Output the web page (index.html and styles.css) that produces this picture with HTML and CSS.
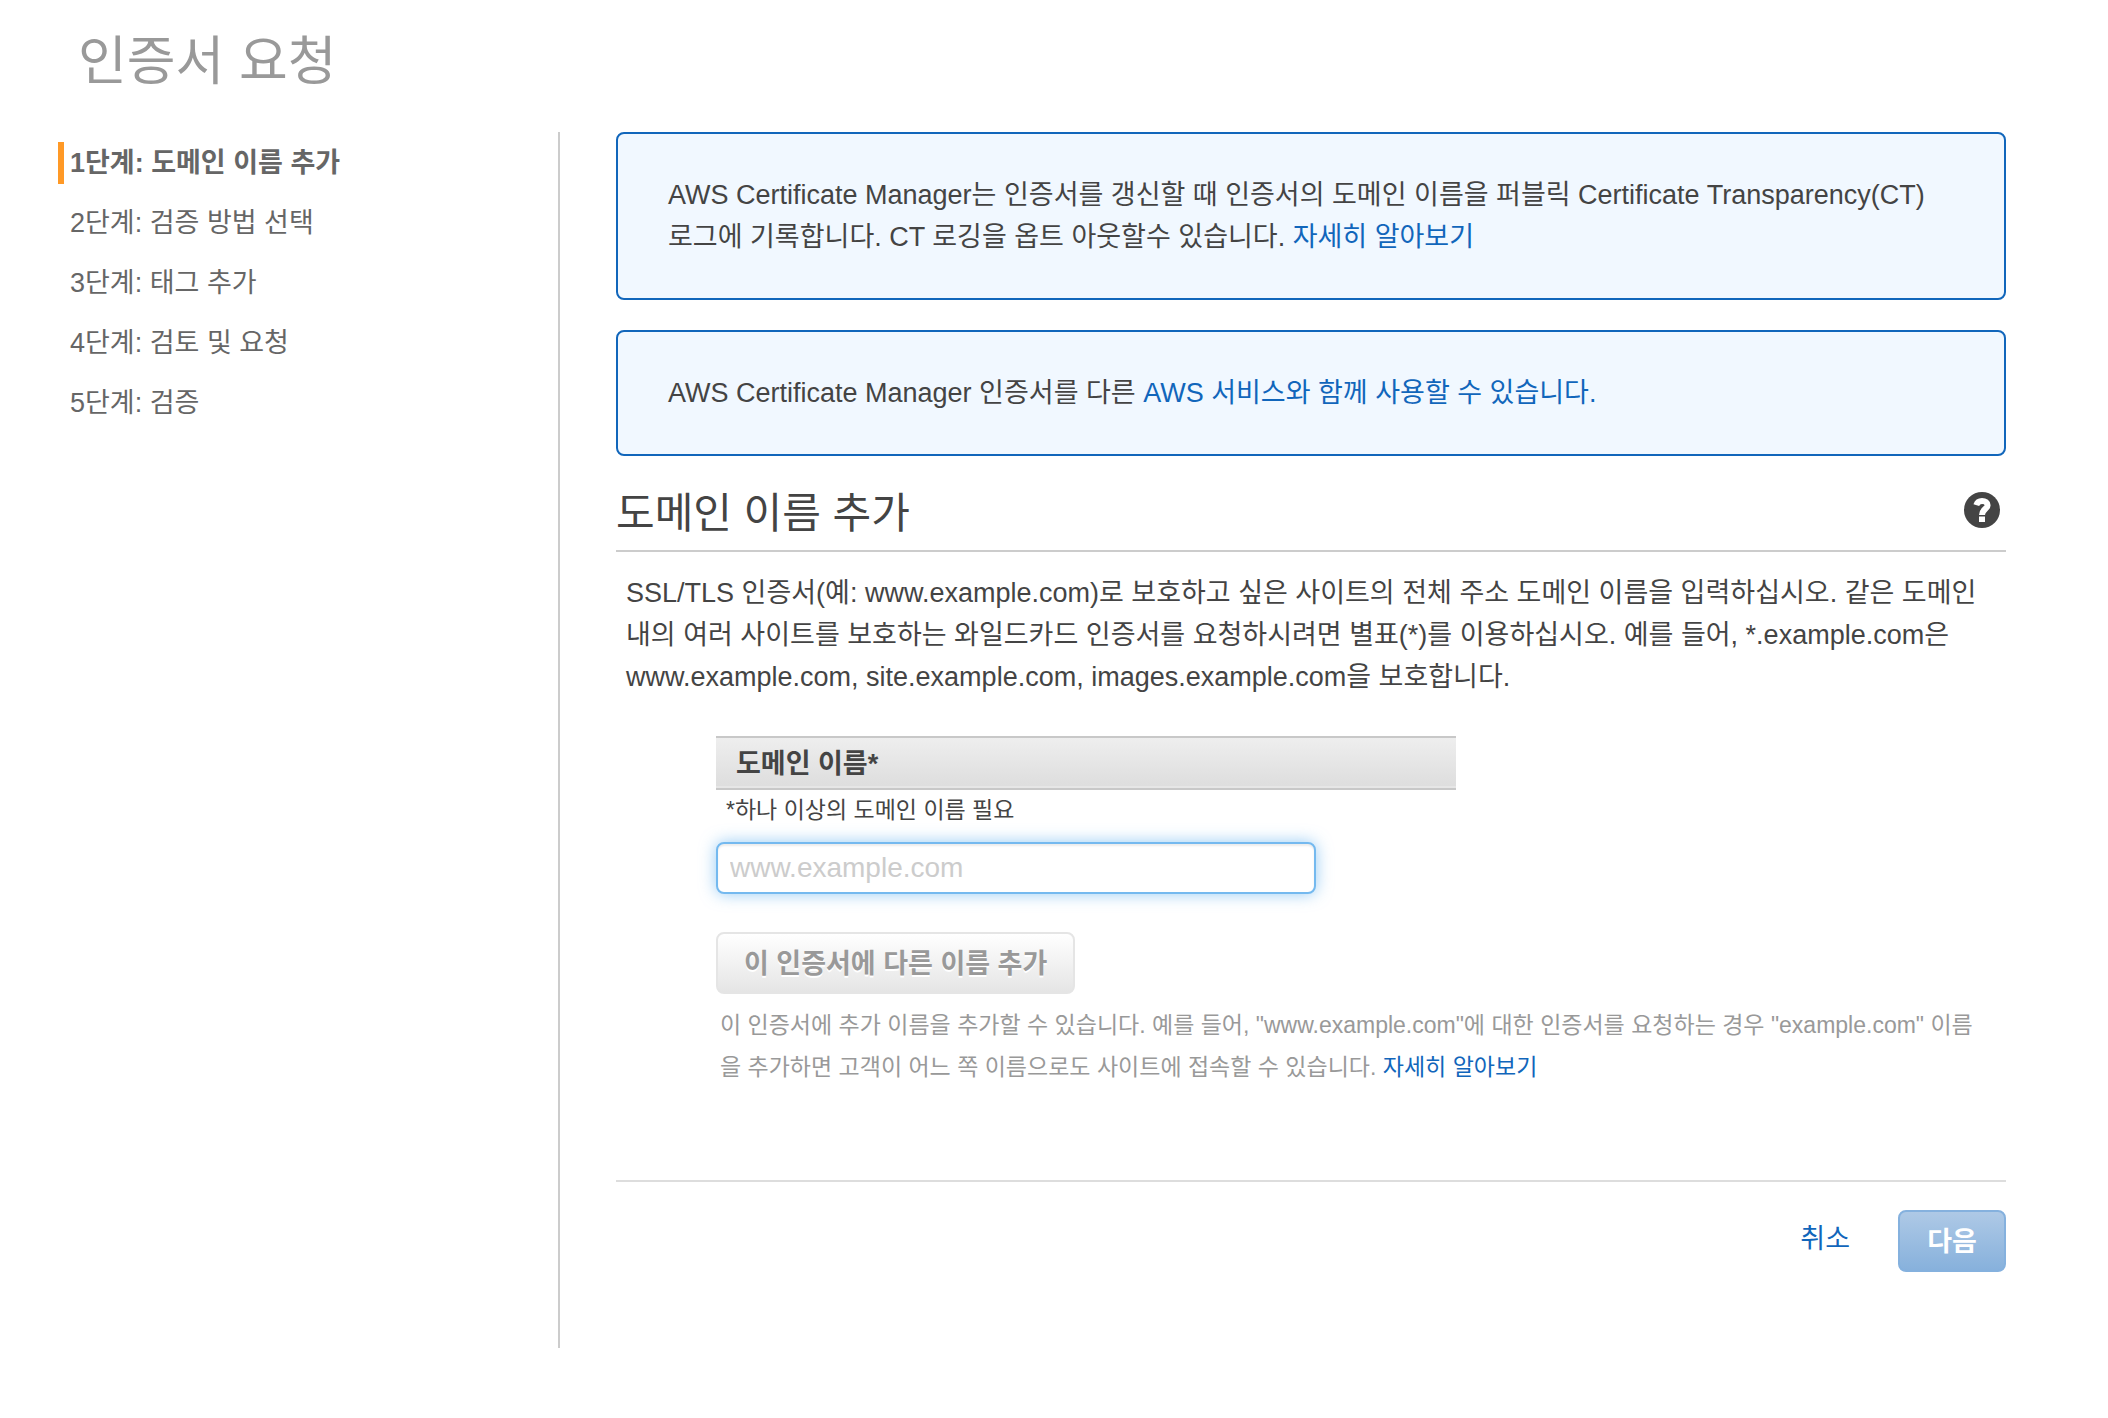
FILE: index.html
```html
<!DOCTYPE html>
<html lang="ko">
<head>
<meta charset="utf-8">
<meta name="viewport" content="width=device-width, initial-scale=1">
<title>인증서 요청</title>
<link rel="stylesheet" href="styles.css">
</head>
<body>
<header class="page-header">
  <h1 class="page-title">인증서 요청</h1>
</header>
<div class="wizard">
  <nav class="steps" aria-label="단계">
    <ol class="step-list">
      <li class="step step-current" aria-current="step">1단계: 도메인 이름 추가</li>
      <li class="step">2단계: 검증 방법 선택</li>
      <li class="step">3단계: 태그 추가</li>
      <li class="step">4단계: 검토 및 요청</li>
      <li class="step">5단계: 검증</li>
    </ol>
  </nav>
  <main class="content">
    <div class="notices">
      <p class="notice">AWS Certificate Manager는 인증서를 갱신할 때 인증서의 도메인 이름을 퍼블릭 Certificate Transparency(CT) 로그에 기록합니다. CT 로깅을 옵트 아웃할수 있습니다. <a class="link" href="#ct">자세히 알아보기</a></p>
      <p class="notice">AWS Certificate Manager 인증서를 다른 <a class="link" href="#services">AWS 서비스와 함께 사용할 수 있습니다.</a></p>
    </div>
    <div class="section-header">
      <h2 class="section-title">도메인 이름 추가</h2>
      <button class="help" type="button" aria-label="도움말">
        <svg class="help-icon" viewBox="0 0 36 36" aria-hidden="true">
          <circle cx="18" cy="18" r="18" fill="#444"/>
          <path d="M12.300 13.200C13.200 10.400 15.200 9 18 9C21.400 9 23.600 10.700 23.600 13.200C23.600 17 18 17 18 23" fill="none" stroke="#fff" stroke-width="6"/>
          <rect x="15" y="24.500" width="6" height="5.500" fill="#fff"/>
        </svg>
      </button>
    </div>
    <p class="intro">SSL/TLS 인증서(예: www.example.com)로 보호하고 싶은 사이트의 전체 주소 도메인 이름을 입력하십시오. 같은 도메인 내의 여러 사이트를 보호하는 와일드카드 인증서를 요청하시려면 별표(*)를 이용하십시오. 예를 들어, *.example.com은 www.example.com, site.example.com, images.example.com을 보호합니다.</p>
    <form class="domain-form" action="#">
      <label class="field-head" for="domain">도메인 이름*</label>
      <p class="field-note" id="domain-note">*하나 이상의 도메인 이름 필요</p>
      <input class="field-input" id="domain" type="text" placeholder="www.example.com" aria-describedby="domain-note">
      <button class="button button-add" type="button">이 인증서에 다른 이름 추가</button>
      <p class="field-help">이 인증서에 추가 이름을 추가할 수 있습니다. 예를 들어, "www.example.com"에 대한 인증서를 요청하는 경우 "example.com" 이름을 추가하면 고객이 어느 쪽 이름으로도 사이트에 접속할 수 있습니다. <a class="link" href="#names">자세히 알아보기</a></p>
    </form>
    <footer class="actions">
      <a class="link cancel" href="#cancel">취소</a>
      <button class="button button-next" type="button">다음</button>
    </footer>
  </main>
</div>
</body>
</html>
```
FILE: styles.css
```css
* {
  box-sizing: border-box;
}

body {
  margin: 0;
  background: #fff;
  color: #444;
  font-family: "Liberation Sans", "Noto Sans CJK KR", sans-serif;
  font-size: 27px;
  line-height: 42px;
}

h1, h2, p, ol {
  margin: 0;
  padding: 0;
  font-weight: normal;
}

button, input {
  font-family: inherit;
}

.link {
  color: #1166bb;
  text-decoration: none;
}

.page-header {
  height: 132px;
  padding: 22px 78px 0;
}

.page-title {
  color: #999;
  font-size: 53px;
  line-height: 80px;
}

.wizard {
  display: grid;
  grid-template-columns: 560px minmax(0, 1fr);
  padding-right: 102px;
  margin-bottom: 70px;
}

.steps {
  border-right: 2px solid #ccc;
  padding: 10px 0 0 58px;
}

.step-list {
  display: flex;
  flex-direction: column;
  gap: 18px;
  list-style: none;
}

.step {
  border-left: 6px solid transparent;
  padding-left: 6px;
  color: #666;
  line-height: 42px;
}

.step-current {
  border-left-color: #ff9926;
  font-weight: bold;
}

.content {
  padding: 0 0 76px 56px;
}

.notices {
  display: flex;
  flex-direction: column;
  gap: 30px;
}

.notice {
  border: 2px solid #1166bb;
  border-radius: 8px;
  padding: 40px 50px;
  background: #f1f8ff;
}

.section-header {
  display: flex;
  align-items: center;
  justify-content: space-between;
  margin-top: 30px;
  border-bottom: 2px solid #ccc;
  padding: 0 6px 16px 0;
}

.section-title {
  padding-top: 8px;
  font-size: 42px;
  line-height: 40px;
}

.help {
  display: flex;
  border: 0;
  padding: 0;
  background: none;
}

.help-icon {
  width: 36px;
  height: 36px;
}

.intro {
  padding: 20px 10px 0;
}

.domain-form {
  display: flex;
  flex-direction: column;
  align-items: flex-start;
  padding: 38px 20px 0 100px;
}

.field-head {
  width: 100%;
  max-width: 740px;
  border: solid #c8c8c8;
  border-width: 2px 0;
  padding: 5px 20px 3px;
  background: linear-gradient(#eee, #ddd);
  box-shadow: inset 0 -2px 0 #e6e6e6;
  font-weight: bold;
}

.field-head,
.button {
  font-size: 27px;
}

.field-note {
  padding: 0 10px;
  font-size: 23px;
  line-height: 40px;
}

.field-input {
  width: 100%;
  max-width: 600px;
  height: 52px;
  margin-top: 12px;
  border: 2px solid #74b9ef;
  border-radius: 8px;
  padding: 0 12px;
  background: #fff;
  box-shadow: 0 0 16px rgba(82, 168, 236, 0.6), inset 0 2px 2px rgba(0, 0, 0, 0.08);
  color: #444;
  font-size: 28px;
}

.field-input::placeholder {
  color: #ccc;
  opacity: 1;
}

.button {
  height: 62px;
  border: 2px solid;
  border-radius: 8px;
  padding: 2px 26px 0;
  font-weight: bold;
  line-height: 42px;
}

.button-add {
  margin-top: 38px;
  border-color: #e5e5e5;
  background: linear-gradient(#fff, #e5e5e5);
  color: #999;
  text-shadow: 0 2px 0 #fff;
}

.field-help {
  padding: 10px 0 0 4px;
  color: #999;
  font-size: 23px;
}

.actions {
  display: flex;
  align-items: flex-start;
  justify-content: flex-end;
  gap: 48px;
  margin-top: 92px;
  border-top: 2px solid #ddd;
  padding-top: 28px;
}

.cancel {
  padding-top: 8px;
}

.button-next {
  min-width: 108px;
  border-color: #85b1de;
  background: linear-gradient(#aec9e6, #87b1dc);
  color: #fff;
}
```
